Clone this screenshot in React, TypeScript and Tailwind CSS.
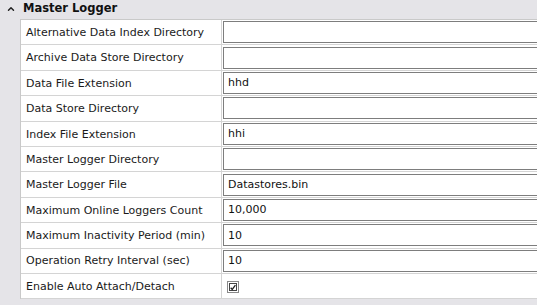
import { ChevronUp } from "lucide-react";

type Row = { label: string; value?: string; check?: boolean };

const ROWS: Row[] = [
  { label: "Alternative Data Index Directory", value: "" },
  { label: "Archive Data Store Directory", value: "" },
  { label: "Data File Extension", value: "hhd" },
  { label: "Data Store Directory", value: "" },
  { label: "Index File Extension", value: "hhi" },
  { label: "Master Logger Directory", value: "" },
  { label: "Master Logger File", value: "Datastores.bin" },
  { label: "Maximum Online Loggers Count", value: "10,000" },
  { label: "Maximum Inactivity Period (min)", value: "10" },
  { label: "Operation Retry Interval (sec)", value: "10" },
  { label: "Enable Auto Attach/Detach", check: true },
];

export default function App() {
  return (
    <div
      className="w-[537px] h-[305px] overflow-hidden bg-[#e5e4e8] text-[#111]"
      style={{ fontFamily: '"DejaVu Sans", Verdana, sans-serif' }}
    >
      {/* Section header */}
      <div className="h-[19px] flex items-center pb-[2px]">
        <ChevronUp size={10} strokeWidth={3.5} className="ml-[6px] mr-[7px] text-[#222]" />
        <span className="text-[11.5px] font-bold leading-none">Master Logger</span>
      </div>

      <div className="flex">
        <div className="w-[20px] shrink-0" />
        <div className="flex-1 bg-white border-t border-l border-[#c9c9c9]">
          {ROWS.map((r) => (
            <div key={r.label} className="flex h-[25.4px] border-b border-[#d4d4d4]">
              <div className="w-[201px] shrink-0 border-r border-[#d4d4d4] flex items-center pl-[5px] pt-[2px] text-[11px] text-[#1a1a1a] whitespace-nowrap">
                {r.label}
              </div>
              <div className="flex-1 flex items-center pl-[1px]">
                {r.check ? (
                  <div className="ml-[4px] mt-[2px] w-[12px] h-[12px] border border-[#8a8a8a] bg-white p-[1px]">
                    <div className="w-full h-full border border-[#444] flex items-center justify-center">
                      <svg width="7" height="7" viewBox="0 0 7 7">
                        <path d="M0.8 3.8 L2.6 5.8 L6.3 0.8" fill="none" stroke="#222" strokeWidth="1.5" />
                      </svg>
                    </div>
                  </div>
                ) : (
                  <div className="flex-1 h-[22px] border border-[#7d7d7d] border-r-0 flex items-center pl-[4px] pt-[1px] text-[11px]">
                    {r.value}
                  </div>
                )}
              </div>
            </div>
          ))}
        </div>
      </div>
    </div>
  );
}
